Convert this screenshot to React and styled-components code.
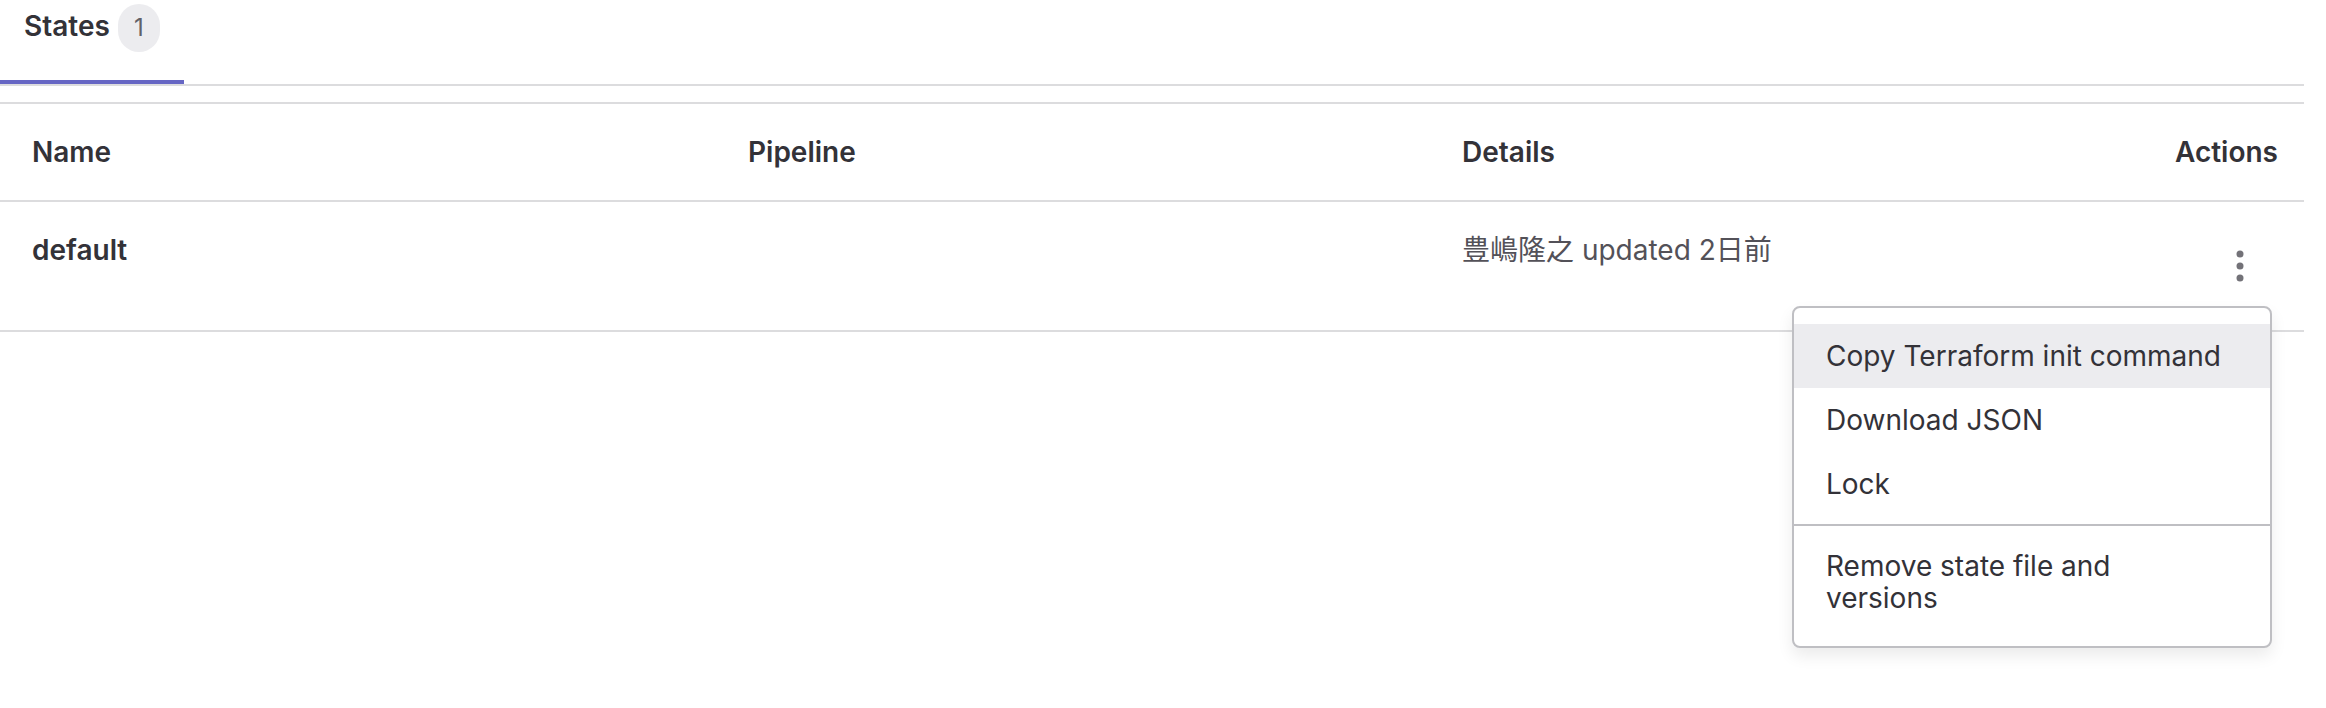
import styled, { createGlobalStyle } from 'styled-components'

const GlobalStyle = createGlobalStyle`
  body {
    margin: 0;
    background: #fff;
    font-family: Inter, "Noto Sans CJK JP", sans-serif;
    color: #333238;
  }
`

const Page = styled.div`
  width: 2304px;
  min-height: 708px;
`

const TabList = styled.div`
  display: flex;
  border-bottom: 2px solid #dcdcde;
`

const Tab = styled.div`
  display: flex;
  align-items: baseline;
  gap: 8px;
  padding: 4px 24px 28px;
  border-bottom: 4px solid #6666c4;
  font-size: 28px;
  font-weight: 600;
  line-height: 32px;
`

const Badge = styled.span`
  display: inline-flex;
  align-items: center;
  justify-content: center;
  box-sizing: border-box;
  min-width: 42px;
  height: 48px;
  padding: 0 12px;
  border-radius: 24px;
  background: #ececef;
  color: #626168;
  font-size: 24px;
  font-weight: 400;
  line-height: 24px;
`

const Table = styled.div`
  margin-top: 16px;
  border-top: 2px solid #dcdcde;
`

const Row = styled.div`
  display: grid;
  grid-template-columns: 716px 714px 1fr 160px;
  border-bottom: 2px solid #dcdcde;
`

const Cell = styled.div`
  display: flex;
  justify-content: ${(p) => (p.$right ? 'flex-end' : 'flex-start')};
  align-items: flex-start;
  padding: 32px ${(p) => p.$padRight || '32px'} 32px 32px;
  font-size: 28px;
  line-height: 32px;
  font-weight: ${(p) => (p.$bold ? 600 : 400)};
  color: ${(p) => (p.$muted ? '#535158' : '#333238')};
`

const ActionWrap = styled.div`
  position: relative;
  width: 64px;
  height: 64px;
`

const KebabButton = styled.button`
  display: flex;
  align-items: center;
  justify-content: center;
  width: 64px;
  height: 64px;
  padding: 0;
  border: none;
  border-radius: 8px;
  background: transparent;
  color: #737278;
`

const Menu = styled.ul`
  position: absolute;
  top: calc(100% + 8px);
  right: 0;
  box-sizing: border-box;
  width: 480px;
  margin: 0;
  padding: 16px 0;
  list-style: none;
  background: #fff;
  border: 2px solid #bfbfc3;
  border-radius: 8px;
  box-shadow: 0 8px 16px rgba(5, 5, 6, 0.08);
  z-index: 2;
`

const MenuItem = styled.li`
  padding: 16px 32px;
  font-size: 28px;
  line-height: 32px;
  font-weight: 400;
  color: #333238;
  background: ${(p) => (p.$active ? '#ececef' : 'transparent')};
`

const Divider = styled.li`
  height: 2px;
  margin: 8px 0;
  background: #bfbfc3;
`

function KebabIcon() {
  return (
    <svg width="32" height="32" viewBox="0 0 32 32" fill="currentColor">
      <circle cx="16" cy="4" r="3.5" />
      <circle cx="16" cy="16" r="3.5" />
      <circle cx="16" cy="28" r="3.5" />
    </svg>
  )
}

function App() {
  return (
    <Page>
      <GlobalStyle />
      <TabList>
        <Tab>
          States
          <Badge>1</Badge>
        </Tab>
      </TabList>
      <Table>
        <Row>
          <Cell $bold>Name</Cell>
          <Cell $bold>Pipeline</Cell>
          <Cell $bold>Details</Cell>
          <Cell $bold $right $padRight="26px">Actions</Cell>
        </Row>
        <Row>
          <Cell $bold>default</Cell>
          <Cell />
          <Cell $muted>豊嶋隆之 updated 2日前</Cell>
          <Cell $right>
            <ActionWrap>
              <KebabButton aria-label="Actions">
                <KebabIcon />
              </KebabButton>
              <Menu>
                <MenuItem $active>Copy Terraform init command</MenuItem>
                <MenuItem>Download JSON</MenuItem>
                <MenuItem>Lock</MenuItem>
                <Divider />
                <MenuItem>
                  Remove state file and
                  <br />
                  versions
                </MenuItem>
              </Menu>
            </ActionWrap>
          </Cell>
        </Row>
      </Table>
    </Page>
  )
}

export default App
